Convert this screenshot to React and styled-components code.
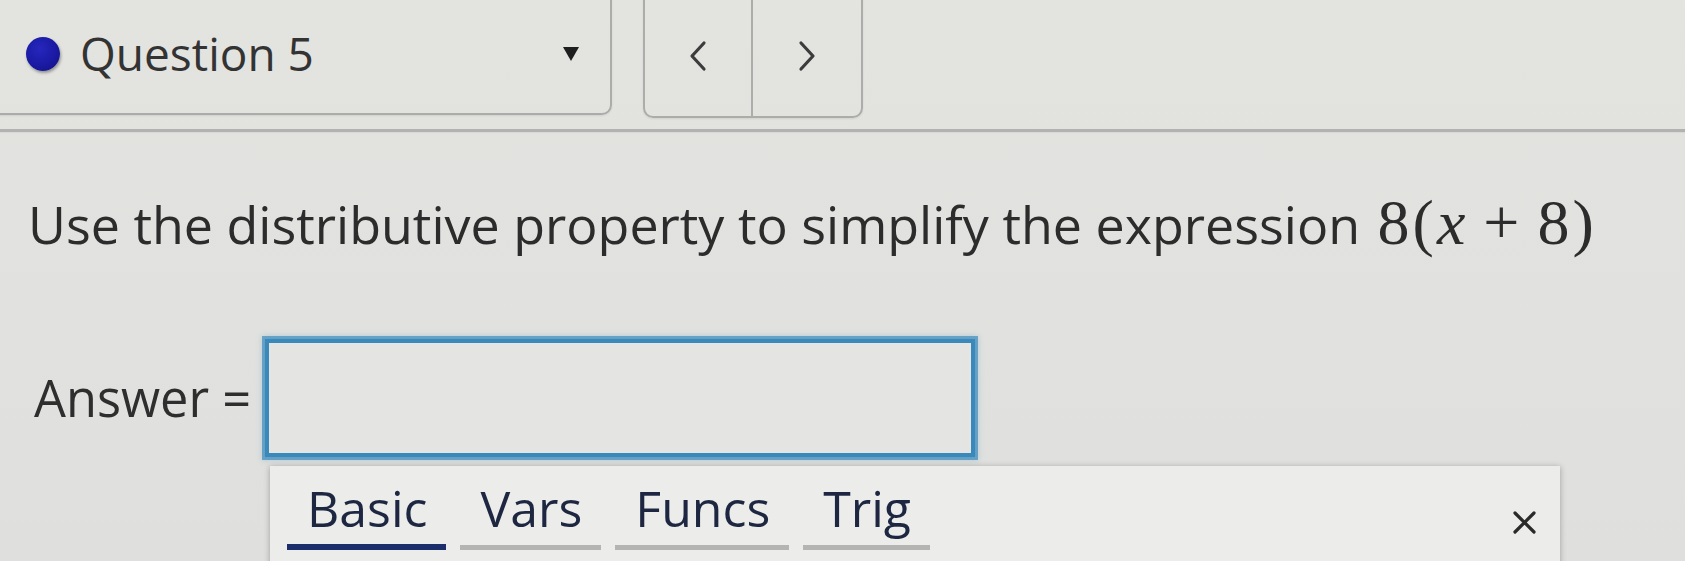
import React from "react";
import styled, { createGlobalStyle } from "styled-components";

const GlobalStyle = createGlobalStyle`
  html, body {
    margin: 0;
    padding: 0;
    background: #e1e1de;
  }
  body {
    font-family: "Open Sans", "Noto Sans", sans-serif;
    overflow: hidden;
  }
`;

const Page = styled.div`
  width: 1685px;
  height: 561px;
  overflow: hidden;
  background: linear-gradient(180deg, #e3e3e0 0%, #e1e2df 60%, #dfe0dd 100%);
  color: #2e2e2e;
`;

const Header = styled.div`
  display: flex;
  align-items: flex-start;
  margin-top: -10px;
`;

const Select = styled.div`
  box-sizing: border-box;
  width: 622px;
  height: 125px;
  margin-left: -10px;
  padding: 2px 30px 0 34px;
  border: 2px solid #acacaa;
  border-radius: 10px;
  display: flex;
  align-items: center;
  gap: 20px;
  box-shadow: 0 1px 2px rgba(0, 0, 0, 0.08);
`;

const Dot = styled.span`
  width: 34px;
  height: 34px;
  border-radius: 50%;
  flex: none;
  background: radial-gradient(circle at 40% 35%, #2626bd 0%, #1a1aa3 55%, #12127a 100%);
  box-shadow: 1px 2px 3px rgba(0, 0, 0, 0.35);
`;

const Title = styled.span`
  font-size: 46px;
  color: #333;
  line-height: 1.36;
`;

const Caret = styled.svg`
  margin-left: auto;
  width: 18px;
  height: 16px;
  flex: none;
`;

const Nav = styled.div`
  box-sizing: border-box;
  margin-left: 31px;
  width: 220px;
  height: 128px;
  border: 2px solid #acacaa;
  border-radius: 10px;
  display: grid;
  grid-template-columns: 1fr 1fr;
  box-shadow: 0 1px 2px rgba(0, 0, 0, 0.08);
`;

const NavButton = styled.div`
  display: flex;
  align-items: center;
  justify-content: center;
  padding-top: 4px;
  border-right: ${(p) => (p.$divider ? "2px solid #acacaa" : "none")};
`;

const Chevron = styled.svg`
  width: 20px;
  height: 32px;
`;

const Rule = styled.div`
  margin-top: 11px;
  height: 0;
  border-top: 3px solid #b2b2b0;
  box-shadow: 0 1px 1px rgba(0, 0, 0, 0.05);
`;

const Question = styled.p`
  margin: 57px 0 0;
  padding-left: 28px;
  font-size: 52px;
  line-height: 70px;
  color: #2c2c2c;
  white-space: nowrap;
`;

const MathExpr = styled.span`
  margin-left: 4px;
  font-family: "Liberation Serif", "DejaVu Serif", serif;
  font-size: 64px;
  line-height: 1;
  color: #2c2c2c;
`;

const MSym = styled.span`
  font-style: ${(p) => (p.$italic ? "italic" : "normal")};
  margin: 0 ${(p) => p.$space || 0}px;
`;

const AnswerRow = styled.div`
  display: flex;
  align-items: center;
  margin-top: 80px;
  padding-left: 34px;
  gap: 14px;
`;

const AnswerLabel = styled.span`
  font-size: 50.5px;
  line-height: 1.36;
  color: #2e2e2e;
`;

const Input = styled.div`
  box-sizing: border-box;
  width: 710px;
  height: 118px;
  border: 4px solid #3a89bb;
  background: #e4e5e2;
  box-shadow: 0 0 0 3px rgba(62, 140, 190, 0.7), 0 0 6px 3px rgba(62, 140, 190, 0.3);
`;

const Panel = styled.div`
  box-sizing: border-box;
  margin: 9px 0 0 270px;
  width: 1290px;
  height: 130px;
  padding: 8px 23px 0 17px;
  background: #ececea;
  box-shadow: 0 1px 6px rgba(0, 0, 0, 0.3);
  display: flex;
  align-items: flex-start;
`;

const Tabs = styled.div`
  display: flex;
  align-items: flex-end;
  gap: 14px;
`;

const Tab = styled.div`
  padding: 0 19px ${(p) => (p.$active ? 2 : 3)}px 20px;
  font-size: 50px;
  line-height: 1.36;
  color: #1e2741;
  border-bottom: ${(p) => (p.$active ? "6px solid #1c2d6b" : "5px solid #b4b4b2")};
`;

const Close = styled.svg`
  margin-left: auto;
  margin-top: 36px;
  width: 25px;
  height: 25px;
`;

export default function App() {
  return (
    <Page>
      <GlobalStyle />
      <Header>
        <Select>
          <Dot />
          <Title>Question 5</Title>
          <Caret viewBox="0 0 18 16">
            <path d="M1 1 H17 L9 15 Z" fill="#1e1e1e" />
          </Caret>
        </Select>
        <Nav>
          <NavButton $divider>
            <Chevron viewBox="0 0 20 32">
              <polyline points="16,3 4,16 16,29" fill="none" stroke="#3c3c3c" strokeWidth="3.2" strokeLinecap="round" strokeLinejoin="round" />
            </Chevron>
          </NavButton>
          <NavButton>
            <Chevron viewBox="0 0 20 32">
              <polyline points="4,3 16,16 4,29" fill="none" stroke="#3c3c3c" strokeWidth="3.2" strokeLinecap="round" strokeLinejoin="round" />
            </Chevron>
          </NavButton>
        </Nav>
      </Header>
      <Rule />
      <Question>
        Use the distributive property to simplify the expression{" "}
        <MathExpr>
          <MSym>8</MSym>
          <MSym $space={3}>(</MSym>
          <MSym $italic>x</MSym>
          <MSym $space={18}>+</MSym>
          <MSym>8</MSym>
          <MSym $space={3}>)</MSym>
        </MathExpr>
      </Question>
      <AnswerRow>
        <AnswerLabel>Answer =</AnswerLabel>
        <Input />
      </AnswerRow>
      <Panel>
        <Tabs>
          <Tab $active>Basic</Tab>
          <Tab>Vars</Tab>
          <Tab>Funcs</Tab>
          <Tab>Trig</Tab>
        </Tabs>
        <Close viewBox="0 0 25 25">
          <path d="M3 3 L22 22 M22 3 L3 22" stroke="#2a2a2a" strokeWidth="3.2" strokeLinecap="round" />
        </Close>
      </Panel>
    </Page>
  );
}
